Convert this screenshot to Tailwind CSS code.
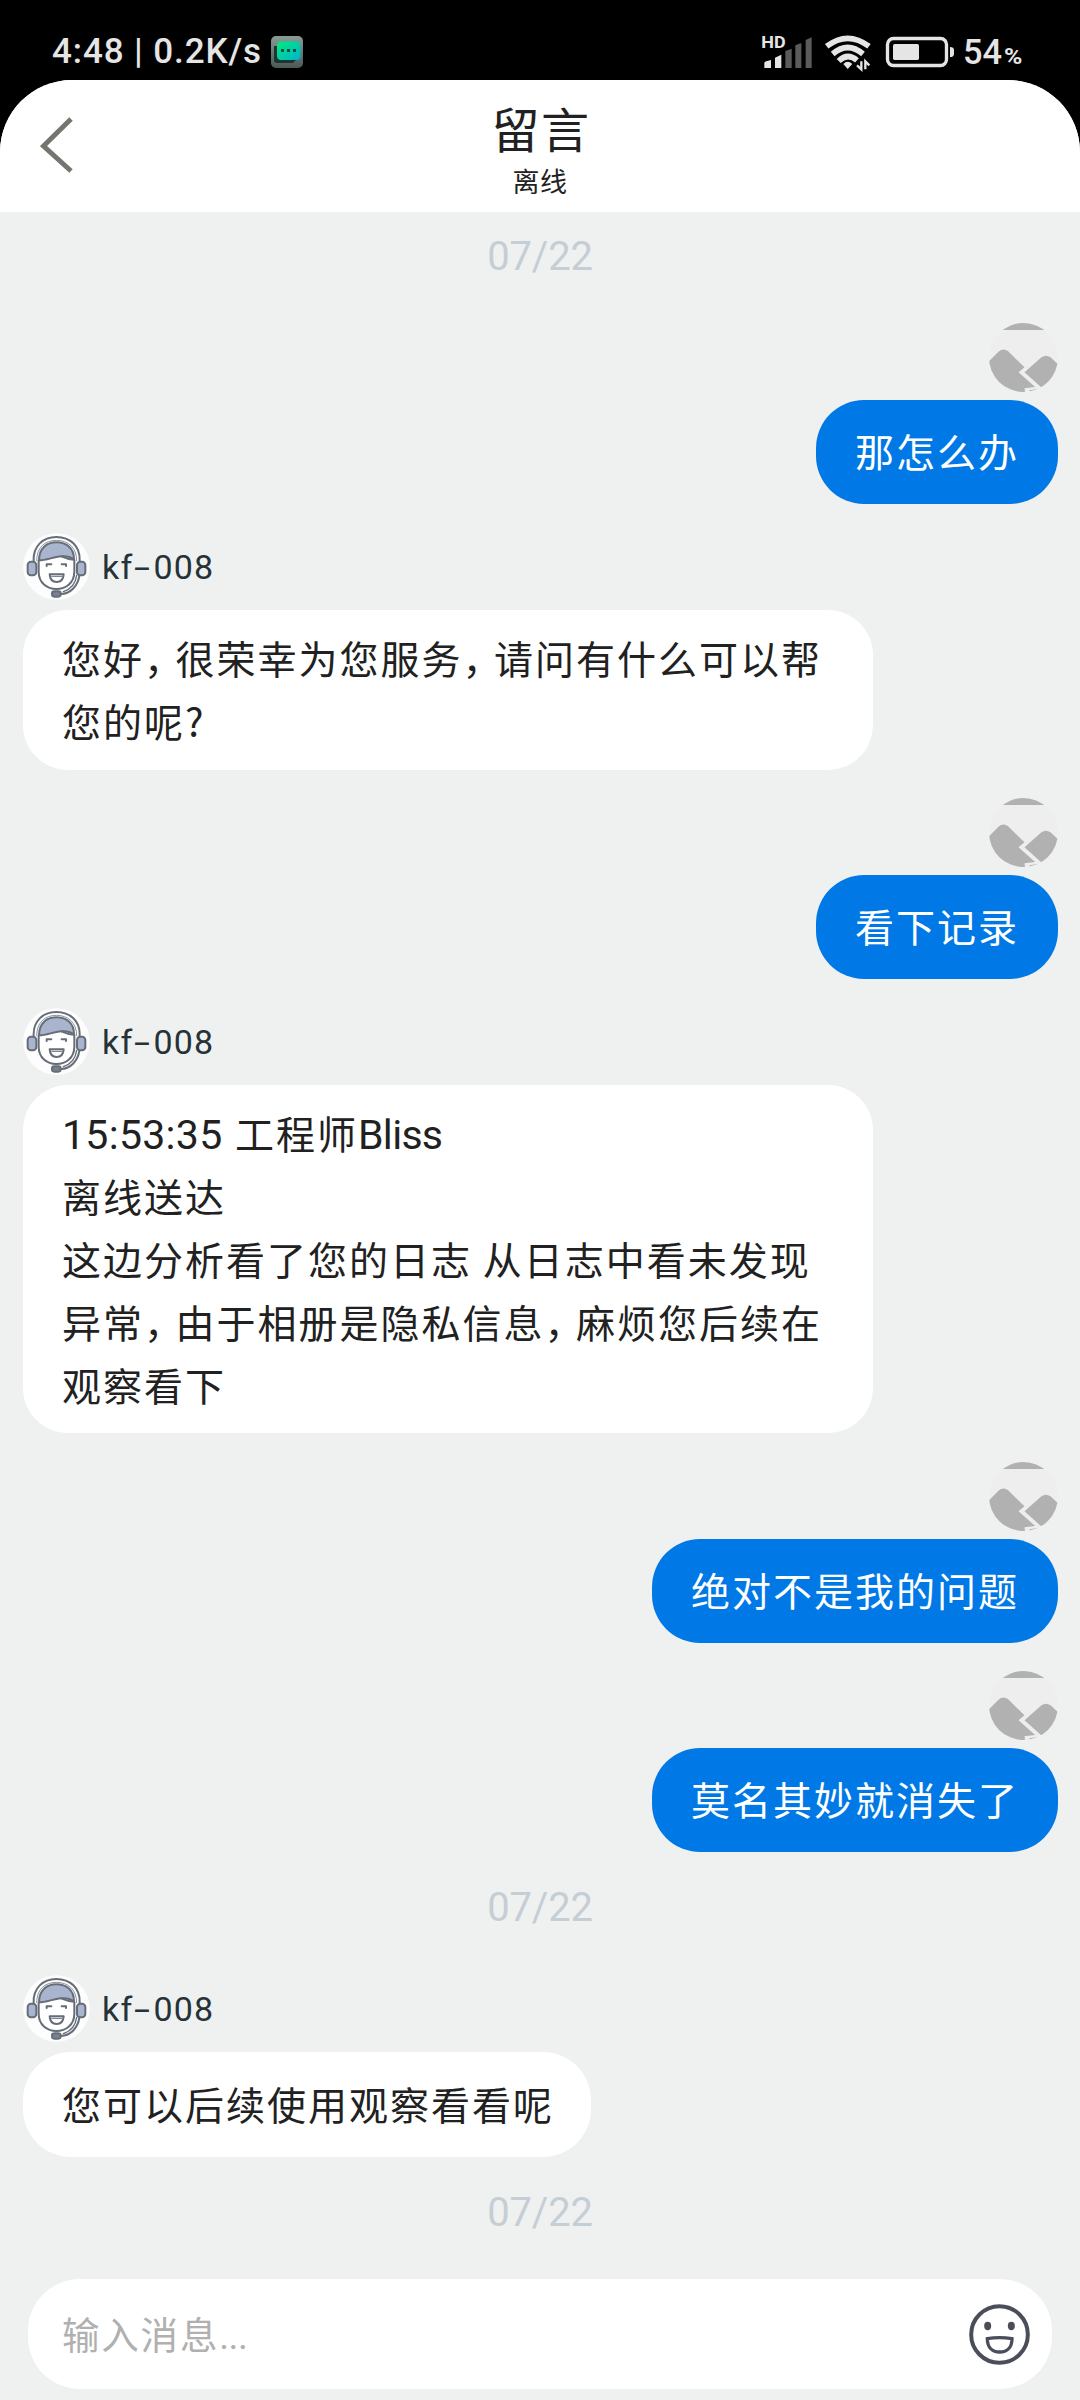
<!DOCTYPE html>
<html lang="zh-CN">
<head>
<meta charset="utf-8">
<title>留言</title>
<script src="https://cdn.jsdelivr.net/npm/@tailwindcss/browser@4"></script>
</head>
<body class="w-[1080px] h-[2400px] overflow-hidden bg-black text-[#212121] font-['Noto_Sans_CJK_SC',sans-serif]">
<svg class="hidden">
  <defs>
    <symbol id="user" viewBox="627 69 206 207">
        <rect x="627" y="69" width="206" height="207" fill="#eeeeee"/>
        <rect x="627" y="69" width="206" height="21" fill="#b1b1b1"/>
        <path d="M600 210 L655 155 Q669 143 684 154 L733 202 L715 217 L765 261 L733 265 L735 280 L627 280Z" fill="#b1b1b1"/>
        <path d="M733 217 L784 172 Q797 162 811 172 L850 208 L833 260 L783 262Z" fill="#b1b1b1"/>
        <path d="M748 271 L776 266 L770 272 L748 275Z" fill="#b1b1b1"/>
    </symbol>
    <symbol id="agent" viewBox="69 39 201 201">
      <circle cx="169.500" cy="139.500" r="100" fill="#fdfdfd"/>
      <g fill="none" stroke="#666d78" stroke-width="6" stroke-linejoin="round" stroke-linecap="round">
        <path d="M101 122 C99 78 129 51 169 51 C210 51 241 78 239 122"/>
        <path d="M110 122 C110 82 135 61 169 61 C204 61 230 82 230 122" stroke-width="3" stroke="#8d939c"/>
        <path d="M116 122 V155 C116 188 141 207 169 207 C198 207 223 188 223 155 V120" fill="#fff"/>
        <path d="M117 121 C117 84 141 67 169 67 C199 67 222 84 222 118 C211 110 198 107 182 109 C158 111 140 121 117 121Z" fill="#a9b5cf"/>
        <path d="M184 109 Q204 118 222 119"/>
        <rect x="83" y="125" width="26" height="41" rx="10" fill="#a9b5cf"/>
        <rect x="231" y="125" width="25" height="41" rx="10" fill="#a9b5cf"/>
        <path d="M238 167 C234 197 212 221 183 222"/>
        <path d="M230 166 C227 188 214 207 190 215" stroke-width="4"/>
        <rect x="156" y="214" width="26" height="16" rx="7" fill="#7a828f"/>
        <path d="M140 138 V133 H154 M185 133 H198 V138"/>
        <path d="M149 163 H191 C190 178 182 186 170 186 C158 186 150 178 149 163Z"/>
        <path d="M155 169 H185" stroke-width="3"/>
      </g>
    </symbol>
  </defs>
</svg>

<!-- status bar -->
<div class="h-20 flex items-start justify-between text-[#e5e5e5] font-['Roboto',sans-serif] font-medium">
  <div class="flex items-center pl-[52px] pt-8 h-[72px]">
    <span class="w-[219px] text-[35px] leading-10 tracking-[0.900px] whitespace-pre">4:48 | 0.2K/s</span>
    <svg class="w-8 h-8" viewBox="0 0 32 32">
      <defs><linearGradient id="chat" x1="0" y1="0" x2="1" y2="1"><stop offset="0" stop-color="#00ec79"/><stop offset="1" stop-color="#00b2cf"/></linearGradient>
      <linearGradient id="tile" x1="0" y1="0" x2="0" y2="1"><stop offset="0" stop-color="#8a9a95"/><stop offset="1" stop-color="#4a5955"/></linearGradient></defs>
      <rect width="32" height="32" rx="5" fill="url(#tile)"/>
      <path d="M3 10 H8 V23 H26 L22 27 H6 Q3 27 3 24Z" fill="#1d3430"/>
      <rect x="6" y="5.500" width="23.500" height="18.500" rx="4" fill="url(#chat)"/>
      <path d="M10 13h3v3h-3zM16 13h3v3h-3zM22 13h3v3h-3z" fill="#064f45"/>
    </svg>
  </div>
  <svg class="w-[360px] h-20" viewBox="0 0 1080 240">
    <g fill="none" stroke="#e5e5e5" stroke-width="17">
      <path d="M320 139 Q383 91 447 139"/>
      <path d="M338 162 Q383 123 429 162"/>
      <path d="M356 183 Q383 157 411 181"/>
    </g>
    <path d="M370 192 Q383 179 397 192 L383 207Z" fill="#e5e5e5"/>
    <path d="M424 184 V208 L411 196 M436 208 V184 L448 196" fill="none" stroke="#e5e5e5" stroke-width="7"/>
    <text x="124" y="144" font-size="49" font-weight="700" fill="#e5e5e5" textLength="73" lengthAdjust="spacingAndGlyphs">HD</text>
    <path d="M133 188 Q134 184 153 180 V204 H133ZM165 173 L184 164 V204 H165Z" fill="#e5e5e5"/>
    <path d="M196 153 L215 146 V204 H196ZM226 136 L244 129 V204 H226ZM257 120 L275 112 V204 H257Z" fill="#5b5b5b"/>
    <rect x="502.500" y="115.500" width="177" height="81" rx="18" fill="none" stroke="#e5e5e5" stroke-width="10"/>
    <rect x="519" y="132" width="78" height="48" rx="5" fill="#e5e5e5"/>
    <path d="M690 141 Q702 141 702 151 V161 Q702 171 690 171Z" fill="#e5e5e5"/>
    <text x="729" y="192" font-size="103" fill="#e5e5e5" textLength="117">54</text>
    <text x="852" y="192" font-size="66" font-weight="700" fill="#e5e5e5" textLength="55" lengthAdjust="spacingAndGlyphs">%</text>
  </svg>
</div>

<main class="h-[2320px] flex flex-col bg-[#eff1f1] rounded-t-[72px] overflow-hidden">
  <header class="h-[132px] shrink-0 bg-white grid grid-cols-[200px_1fr_200px]">
    <svg class="w-[34px] h-[56px] ml-10 mt-[37px]" viewBox="0 0 34 56" fill="none" stroke="#757570" stroke-width="5"><path d="M31 2 L3.500 29 L31 54"/></svg>
    <div class="flex flex-col items-center pt-[17px]">
      <h1 class="text-[48px] leading-[60px] tracking-[1.500px] pl-0.5 font-normal">留言</h1>
      <p class="text-[27px] leading-[36px] tracking-[0.500px] mt-[6px]">离线</p>
    </div>
  </header>

  <section class="flex flex-col gap-[29px] text-[39px] leading-[63px] tracking-[2px]">
    <time class="h-[82px] pt-[15px] text-center font-['Roboto',sans-serif] text-[40px] leading-[60px] tracking-[-0.200px] text-[#c5ced4]">07/22</time>

    <div class="flex flex-col items-end gap-2 pr-[22px]">
      <svg class="w-[69px] h-[69px] rounded-full overflow-hidden"><use href="#user"/></svg>
      <p class="h-[104px] px-[39px] pb-[3px] flex items-center rounded-[48px] bg-[#0079e6] text-white">那怎么办</p>
    </div>

    <div class="flex flex-col items-start gap-2.5 pl-[23px]">
      <div class="flex items-center h-[67px] text-[#263238] font-['Roboto',sans-serif] text-[34px] leading-10 tracking-[1.200px]">
        <svg class="w-[67px] h-[67px] mr-3"><use href="#agent"/></svg><span>kf</span><span class="w-[20px] text-center scale-x-[1.700]">-</span><span>008</span>
      </div>
      <div class="w-[850px] h-[160px] -mb-px pl-[39px] pt-4 rounded-[45px] bg-white whitespace-nowrap">
        <p>您好<span class="inline-block w-[31.500px] [font-feature-settings:'halt']">，</span>很荣幸为您服务<span class="inline-block w-[31.500px] [font-feature-settings:'halt']">，</span>请问有什么可以帮</p>
        <p>您的呢?</p>
      </div>
    </div>

    <div class="flex flex-col items-end gap-2 pr-[22px]">
      <svg class="w-[69px] h-[69px] rounded-full overflow-hidden"><use href="#user"/></svg>
      <p class="h-[104px] px-[39px] pb-[3px] flex items-center rounded-[48px] bg-[#0079e6] text-white">看下记录</p>
    </div>

    <div class="flex flex-col items-start gap-2.5 pl-[23px]">
      <div class="flex items-center h-[67px] text-[#263238] font-['Roboto',sans-serif] text-[34px] leading-10 tracking-[1.200px]">
        <svg class="w-[67px] h-[67px] mr-3"><use href="#agent"/></svg><span>kf</span><span class="w-[20px] text-center scale-x-[1.700]">-</span><span>008</span>
      </div>
      <div class="w-[850px] h-[348px] pl-[39px] pt-4 rounded-[45px] bg-white whitespace-nowrap">
        <p class="flex items-baseline h-[63px]"><span class="w-[173px] font-['Roboto',sans-serif] text-[41px] tracking-[0.300px]">15:53:35</span><span>工程师</span><span class="font-['Roboto',sans-serif] text-[41px] tracking-[-0.700px]">Bliss</span></p>
        <p>离线送达</p>
        <p>这边分析看了您的日志 从日志中看未发现</p>
        <p>异常<span class="inline-block w-[31.500px] [font-feature-settings:'halt']">，</span>由于相册是隐私信息<span class="inline-block w-[31.500px] [font-feature-settings:'halt']">，</span>麻烦您后续在</p>
        <p>观察看下</p>
      </div>
    </div>

    <div class="flex flex-col items-end gap-2 pr-[22px]">
      <svg class="w-[69px] h-[69px] rounded-full overflow-hidden"><use href="#user"/></svg>
      <p class="h-[104px] px-[39px] pb-[3px] flex items-center rounded-[48px] bg-[#0079e6] text-white">绝对不是我的问题</p>
    </div>

    <div class="-mt-px flex flex-col items-end gap-2 pr-[22px]">
      <svg class="w-[69px] h-[69px] rounded-full overflow-hidden"><use href="#user"/></svg>
      <p class="h-[104px] px-[39px] pb-[3px] flex items-center rounded-[48px] bg-[#0079e6] text-white">莫名其妙就消失了</p>
    </div>

    <time class="h-[65px] text-center font-['Roboto',sans-serif] text-[40px] leading-[54px] tracking-[-0.200px] text-[#c5ced4]">07/22</time>

    <div class="flex flex-col items-start gap-2.5 pl-[23px]">
      <div class="flex items-center h-[67px] text-[#263238] font-['Roboto',sans-serif] text-[34px] leading-10 tracking-[1.200px]">
        <svg class="w-[67px] h-[67px] mr-3"><use href="#agent"/></svg><span>kf</span><span class="w-[20px] text-center scale-x-[1.700]">-</span><span>008</span>
      </div>
      <p class="w-[568px] h-[105px] pl-[39px] pb-[3px] flex items-center rounded-[48px] bg-white">您可以后续使用观察看看呢</p>
    </div>

    <time class="h-[60px] text-center font-['Roboto',sans-serif] text-[40px] leading-[54px] tracking-[-0.200px] text-[#c5ced4]">07/22</time>
  </section>

  <footer class="mt-auto mb-[11px] mx-7 h-[110px] shrink-0 rounded-[52px] bg-white flex items-center justify-between pl-[34px] pr-[22px]">
    <span class="text-[37.500px] tracking-[1.800px] leading-[60px] text-[#b0b0b0]">输入消息<span class="font-['Roboto',sans-serif] tracking-[-0.500px]">...</span></span>
    <svg class="w-[61px] h-[61px]" viewBox="267 159 183 183">
      <circle cx="358.500" cy="250.500" r="85" fill="none" stroke="#4b4e59" stroke-width="12"/>
      <ellipse cx="323" cy="225" rx="10.500" ry="12.500" fill="#4b4e59"/>
      <ellipse cx="394" cy="225" rx="10.500" ry="12.500" fill="#4b4e59"/>
      <path d="M322 263 Q358 257 396 263 C396 289 381 303 359 303 C337 303 322 289 322 263Z" fill="none" stroke="#4b4e59" stroke-width="10"/>
    </svg>
  </footer>
</main>
</body>
</html>
